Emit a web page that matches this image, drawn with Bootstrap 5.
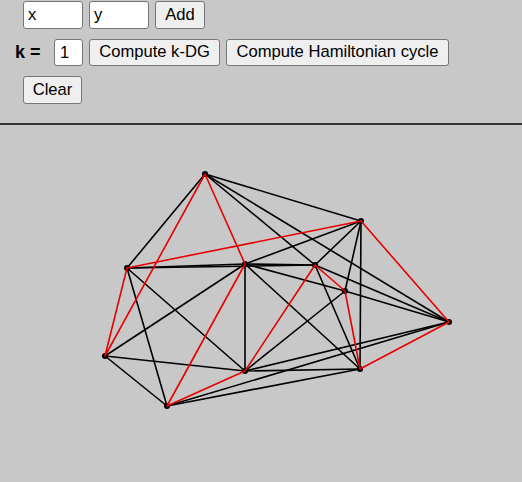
<!DOCTYPE html>
<html lang="en">
<head>
<meta charset="utf-8">
<title>k-DG</title>
<link href="https://cdn.jsdelivr.net/npm/bootstrap@5.3.0/dist/css/bootstrap.min.css" rel="stylesheet">
<style>
html,body{height:100%;overflow:hidden}
body{background:#c8c8c8;font-family:"Liberation Sans",Arial,sans-serif;color:#000;display:flex;flex-direction:column}
.toolbar{height:125px;flex:none;border-bottom:2px solid #333;padding:1px 0 0 23px;display:flex;flex-direction:column;align-items:flex-start}
.tool-row{display:flex;align-items:center;gap:6px}
.row-two{margin-top:10px;margin-left:-8px}
.row-three{margin-top:10px}
.plain-btn.btn{font:16.6px/1 "Liberation Sans",Arial,sans-serif;background:#efefef;color:#000;border:1px solid #767676;border-radius:3px;padding:0;height:28px;display:flex;align-items:center;justify-content:center}
.row-two .plain-btn.btn{height:27px}
.plain-input.form-control{font:16.6px/1 "Liberation Sans",Arial,sans-serif;background:#fff;color:#000;border:1px solid #767676;border-radius:3px;padding:0 0 0 4px;height:28px;min-height:0;width:60px}
.row-two .plain-input.form-control{height:27px;width:29px;padding-left:5px}
.k-label{font-weight:700;font-size:18px;width:33px;line-height:27px}
.w-add{width:50px}.w-kdg{width:131px}.w-ham{width:223px}.w-clear{width:59px}
.canvas-wrap{flex:1;min-height:0}
.canvas-wrap svg{display:block}
.edge{stroke:#000;stroke-width:1.6;stroke-linecap:round}
.cycle{stroke:#e80000;stroke-width:1.6;stroke-linecap:round;fill:none;stroke-linejoin:round}
</style>
</head>
<body>
<div class="toolbar">
  <div class="tool-row">
    <input class="form-control plain-input" value="x" aria-label="x">
    <input class="form-control plain-input" value="y" aria-label="y">
    <button type="button" class="btn plain-btn w-add">Add</button>
  </div>
  <div class="tool-row row-two">
    <span class="k-label">k =</span>
    <input class="form-control plain-input" value="1" aria-label="k">
    <button type="button" class="btn plain-btn w-kdg">Compute k-DG</button>
    <button type="button" class="btn plain-btn w-ham">Compute Hamiltonian cycle</button>
  </div>
  <div class="tool-row row-three">
    <button type="button" class="btn plain-btn w-clear">Clear</button>
  </div>
</div>
<div class="canvas-wrap">
<svg width="522" height="357" viewBox="0 125 522 357" xmlns="http://www.w3.org/2000/svg" aria-label="graph">
  <g class="edge">
    <line x1="205" y1="174" x2="127" y2="268"/>
    <line x1="205" y1="174" x2="361" y2="221"/>
    <line x1="205" y1="174" x2="315" y2="265"/>
    <line x1="205" y1="174" x2="449" y2="322"/>
    <line x1="127" y1="268" x2="245" y2="264"/>
    <line x1="127" y1="268" x2="315" y2="265"/>
    <line x1="127" y1="268" x2="245" y2="371"/>
    <line x1="127" y1="268" x2="167" y2="406"/>
    <line x1="245" y1="264" x2="361" y2="221"/>
    <line x1="245" y1="264" x2="315" y2="265"/>
    <line x1="245" y1="264" x2="245" y2="371"/>
    <line x1="245" y1="264" x2="105" y2="356"/>
    <line x1="245" y1="264" x2="360" y2="369"/>
    <line x1="245" y1="264" x2="345" y2="291"/>
    <line x1="315" y1="265" x2="361" y2="221"/>
    <line x1="315" y1="265" x2="449" y2="322"/>
    <line x1="315" y1="265" x2="360" y2="369"/>
    <line x1="345" y1="291" x2="361" y2="221"/>
    <line x1="345" y1="291" x2="245" y2="371"/>
    <line x1="345" y1="291" x2="449" y2="322"/>
    <line x1="361" y1="221" x2="360" y2="369"/>
    <line x1="245" y1="371" x2="360" y2="369"/>
    <line x1="245" y1="371" x2="449" y2="322"/>
    <line x1="105" y1="356" x2="245" y2="371"/>
    <line x1="105" y1="356" x2="167" y2="406"/>
    <line x1="167" y1="406" x2="449" y2="322"/>
    <line x1="167" y1="406" x2="360" y2="369"/>
  </g>
  <g fill="#000">
    <circle cx="205" cy="174" r="3"/><circle cx="361" cy="221" r="3"/>
    <circle cx="127" cy="268" r="3"/><circle cx="245" cy="264" r="3"/>
    <circle cx="315" cy="265" r="3"/><circle cx="345" cy="291" r="3"/>
    <circle cx="449" cy="322" r="3"/><circle cx="105" cy="356" r="3"/>
    <circle cx="245" cy="371" r="3"/><circle cx="360" cy="369" r="3"/>
    <circle cx="167" cy="406" r="3"/>
  </g>
  <polygon class="cycle" points="205,174 245,264 167,406 245,371 315,265 345,291 360,369 449,322 361,221 127,268 105,356"/>
</svg>
</div>
<script src="https://cdn.jsdelivr.net/npm/bootstrap@5.3.0/dist/js/bootstrap.bundle.min.js"></script>
</body>
</html>
